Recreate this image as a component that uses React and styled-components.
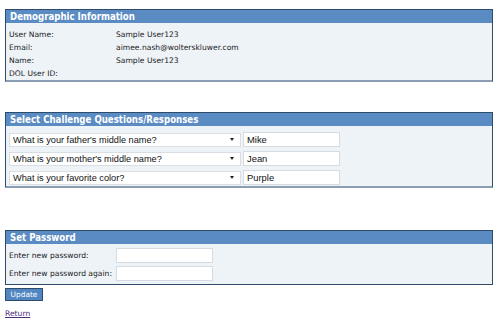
import React from 'react'
import styled, { createGlobalStyle } from 'styled-components'

const GlobalStyle = createGlobalStyle`
  body {
    margin: 0;
    background: #ffffff;
    font-family: "DejaVu Sans", Verdana, sans-serif;
  }
`

const Page = styled.div`
  width: 488px;
  padding: 9px 0 0 5px;
  display: flex;
  flex-direction: column;
`

const Panel = styled.section`
  border: 1px solid #2d4b6b;
  border-bottom: ${(p) => (p.$shade ? '2px solid #8a9db2' : '1px solid #2d4b6b')};
  background: #eef3f8;
  margin-bottom: ${(p) => p.$gap || 0}px;
`

const Header = styled.h2`
  margin: 0;
  height: 13px;
  line-height: 13px;
  padding-left: 4px;
  background: #5a8bc3;
  color: #ffffff;
  font-family: "DejaVu Sans Condensed", "DejaVu Sans", sans-serif;
  font-size: 9.6px;
  font-weight: bold;
`

const InfoList = styled.div`
  padding: 5px 0 0 3px;
  display: grid;
  grid-template-columns: 107px 1fr;
  grid-auto-rows: 13px;
  font-size: 7.6px;
  color: #222;
  align-items: center;
`

const QuestionList = styled.div`
  padding: 6px 0 1px 3px;
  display: flex;
  flex-direction: column;
  gap: 4px;
`

const QuestionRow = styled.div`
  display: flex;
  gap: 2px;
  align-items: center;
`

const Select = styled.div`
  width: 232px;
  height: 14px;
  box-sizing: border-box;
  background: #fff;
  border: 1px solid #d9dee4;
  display: flex;
  align-items: center;
  justify-content: space-between;
  padding: 0 6px 0 3px;
  font-family: "Liberation Sans", Arial, sans-serif;
  font-size: 9.2px;
  color: #111;
`

const Caret = styled.span`
  width: 0;
  height: 0;
  border-left: 2.5px solid transparent;
  border-right: 2.5px solid transparent;
  border-top: 3px solid #222;
`

const AnswerInput = styled.div`
  width: 97px;
  height: 15px;
  box-sizing: border-box;
  background: #fff;
  border: 1px solid #d6dbe1;
  padding: 0 3px;
  display: flex;
  align-items: center;
  font-family: "Liberation Sans", Arial, sans-serif;
  font-size: 9.4px;
  color: #111;
`

const PasswordList = styled.div`
  padding: 4px 0 3px 3px;
  display: flex;
  flex-direction: column;
  gap: 3px;
`

const PasswordRow = styled.div`
  display: flex;
  align-items: center;
  font-size: 7.6px;
  color: #222;
`

const FieldLabel = styled.span`
  width: 107px;
`

const PasswordInput = styled.div`
  width: 97px;
  height: 15px;
  box-sizing: border-box;
  background: #fff;
  border: 1px solid #d6dbe1;
`

const Button = styled.button`
  margin-top: 3px;
  width: 38px;
  height: 13px;
  padding: 0;
  background: #5186c2;
  border: 1px solid #2d4b6b;
  color: #fff;
  font-family: "DejaVu Sans", Verdana, sans-serif;
  font-size: 7.4px;
  line-height: 11px;
`

const ReturnLink = styled.a`
  margin-top: 8px;
  align-self: flex-start;
  color: #4b2a7a;
  font-size: 7.6px;
  text-decoration: underline;
`

const demographics = [
  ['User Name:', 'Sample User123'],
  ['Email:', 'aimee.nash@wolterskluwer.com'],
  ['Name:', 'Sample User123'],
  ['DOL User ID:', ''],
]

const questions = [
  ["What is your father's middle name?", 'Mike'],
  ["What is your mother's middle name?", 'Jean'],
  ['What is your favorite color?', 'Purple'],
]

const App = () => {
  return (
    <>
      <GlobalStyle />
      <Page>
        <Panel $shade $gap={30}>
          <Header>Demographic Information</Header>
          <InfoList>
            {demographics.map(([label, value]) => (
              <React.Fragment key={label}>
                <span>{label}</span>
                <span>{value}</span>
              </React.Fragment>
            ))}
          </InfoList>
        </Panel>

        <Panel $shade $gap={42}>
          <Header>Select Challenge Questions/Responses</Header>
          <QuestionList>
            {questions.map(([q, a]) => (
              <QuestionRow key={q}>
                <Select>
                  <span>{q}</span>
                  <Caret />
                </Select>
                <AnswerInput>{a}</AnswerInput>
              </QuestionRow>
            ))}
          </QuestionList>
        </Panel>

        <Panel>
          <Header>Set Password</Header>
          <PasswordList>
            <PasswordRow>
              <FieldLabel>Enter new password:</FieldLabel>
              <PasswordInput />
            </PasswordRow>
            <PasswordRow>
              <FieldLabel>Enter new password again:</FieldLabel>
              <PasswordInput />
            </PasswordRow>
          </PasswordList>
        </Panel>
        <Button>Update</Button>
        <ReturnLink href="#">Return</ReturnLink>
      </Page>
    </>
  )
}

export default App
